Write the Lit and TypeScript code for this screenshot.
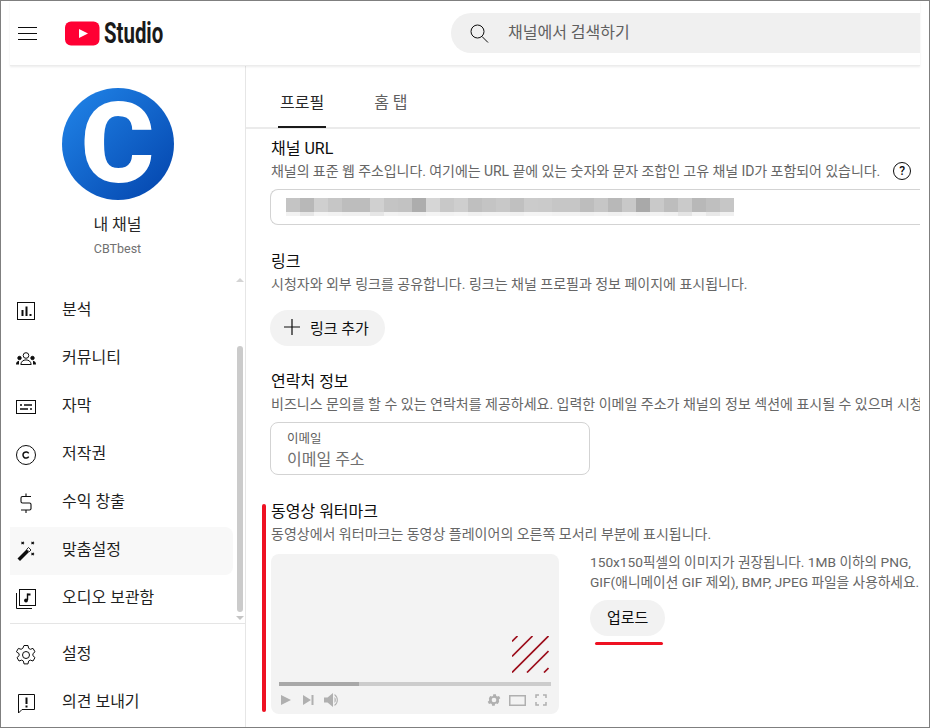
import { LitElement, html, css, svg } from "lit";
import { customElement } from "lit/decorators.js";
import { styleMap } from "lit/directives/style-map.js";

const BLUR = ["#c4c4c4","#b8b8b8","#cfcfcf","#c6c6c6","#bdbdbd","#bdbdbd","#d0d0d0","#c4c4c4","#c2c2c2","#adadad","#d6d6d6","#c8c8c8","#cecece","#bfbfbf","#c4c4c4","#c8c8c8","#c0c0c0","#cbcbcb","#cacaca","#c6c6c6","#c6c6c6","#bdbdbd","#c6c6c6","#b8b8b8","#c8c8c8","#a9a9a9","#c9c9c9","#bdbdbd","#cacaca","#b8b8b8","#bfbfbf","#c6c6c6"];
const BLUR2 = ["#f2f2f2","#e6e6e6","#f4f4f4","#f2f2f2","#f0f0f0","#f0f0f0","#e6e6e6","#f2f2f2","#f0f0f0","#f0f0f0","#f4f4f4","#f2f2f2","#f4f4f4","#f0f0f0","#f2f2f2","#f2f2f2","#f0f0f0","#f4f4f4","#f4f4f4","#f2f2f2","#f2f2f2","#f0f0f0","#f2f2f2","#f0f0f0","#f2f2f2","#f0f0f0","#f2f2f2","#f0f0f0","#e4e4e4","#f2f2f2","#e8e8e8","#f0f0f0"];

const I = (body: unknown) => html`<svg class="ico" viewBox="0 0 24 24" fill="none" stroke="#0d0d0d" stroke-width="1">${body}</svg>`;

const ICONS: Record<string, unknown> = {
  analytics: I(svg`<rect x="3.500" y="3.500" width="17" height="17"/><path d="M8.500 11v6M12.500 7.500V17M16.500 15v2" stroke-width="2"/>`),
  community: I(svg`<circle cx="12" cy="8.500" r="2.800"/><path d="M6.800 17.500c.3-3 2.400-4.600 5.200-4.600s4.900 1.600 5.200 4.600z"/><circle cx="5.500" cy="11" r="1.700" fill="#0d0d0d"/><circle cx="18.500" cy="11" r="1.700" fill="#0d0d0d"/><path d="M2 17.500c0-2 1-3.500 3-3.700v3.700zM22 17.500c0-2-1-3.500-3-3.700v3.700z" fill="#0d0d0d" stroke="none"/>`),
  subtitles: I(svg`<rect x="2.500" y="5.500" width="19" height="13"/><path d="M6 10h2M10 10h8M6 14h8M16 14h2" stroke-width="1.500"/>`),
  copyright: I(svg`<circle cx="12" cy="12" r="9.500"/><path d="M14.700 10.300a3.100 3.100 0 1 0 0 3.400" stroke-width="1.500"/>`),
  money: I(svg`<path d="M17 5.500H8.500A1.500 1.500 0 0 0 7 7v3.500A1.500 1.500 0 0 0 8.500 12h7a1.500 1.500 0 0 1 1.500 1.500V17.500a1.500 1.500 0 0 1-1.500 1.500H7M12 2.500v3M12 19v3" stroke-width="1.100"/>`),
  wand: I(svg`<path d="M3.500 19.500l9-9 2.500 2.500-9 9z" fill="#0d0d0d" stroke="none"/><path d="M12.700 10.300l1.800-1.800 2.500 2.500-1.800 1.800z" fill="#fff" stroke-width=".9"/><path d="M7.500 2.800l2.400 2.400M9.900 2.800L7.500 5.200M17.500 2.800l2.400 2.400M19.900 2.800l-2.400 2.400M17.500 13.800l2.400 2.400M19.900 13.800l-2.400 2.400" stroke-width="1.200"/>`),
  audio: I(svg`<rect x="5.500" y="2.500" width="16" height="16"/><path d="M2.500 6v15.500H18"/><path d="M13.500 6.500v6.500" stroke-width="1.400"/><circle cx="12" cy="13.500" r="1.900" fill="#0d0d0d" stroke="none"/><path d="M13.500 6.500h3v2h-3z" fill="#0d0d0d" stroke="none"/>`),
  gear: I(svg`<circle cx="12" cy="12" r="3.500"/><path d="M10 2.500h4l.6 2.800 1.700 1 2.700-.9 2 3.400-2.100 1.900v2l2.100 1.900-2 3.400-2.700-.9-1.700 1-.6 2.800h-4l-.6-2.800-1.700-1-2.700.9-2-3.400 2.100-1.900v-2L2.400 8.800l2-3.400 2.700.9 1.700-1z"/>`),
  feedback: I(svg`<path d="M4.500 3.500h16v15H8L4.500 22z"/><path d="M12.500 6.500v6.500M12.500 14.500v2" stroke-width="2"/>`),
};

const NAV = [
  ["analytics", "분석"], ["community", "커뮤니티"], ["subtitles", "자막"], ["copyright", "저작권"],
  ["money", "수익 창출"], ["wand", "맞춤설정"], ["audio", "오디오 보관함"],
];

@customElement("app-root")
export class AppRoot extends LitElement {
  static styles = css`
    :host { display: block; font-family: Roboto, "Noto Sans CJK KR", sans-serif; color: #0d0d0d; }
    * { box-sizing: border-box; }
    .frame { width: 930px; height: 728px; border: 1px solid #7f7f7f; background: #fff; padding: 0 9px; overflow: hidden; display: flex; flex-direction: column; }
    .ico { width: 24px; height: 24px; flex: none; display: block; }

    .header { height: 65px; flex: none; display: flex; align-items: center; border-bottom: 1px solid #ececec; box-shadow: 0 1px 2px rgba(0,0,0,.08); position: relative; z-index: 1; }
    .burger { width: 19px; margin-left: 8px; display: flex; flex-direction: column; gap: 5px; }
    .burger i { display: block; height: 1px; background: #0d0d0d; }
    .logo { margin-left: 28px; display: flex; align-items: center; gap: 4px; }
    .logo svg { display: block; }
    .studio { display: inline-block; width: 60px; font-family: Roboto, sans-serif; font-weight: 700; font-size: 30px; line-height: 30px; color: #1a1a1a; transform: scaleX(.68); transform-origin: left center; white-space: nowrap; }
    .search { margin-left: 287px; flex: 1; height: 40px; margin-top: -1px; background: #f0f0f0; border-radius: 20px 0 0 20px; display: flex; align-items: center; padding-left: 16px; gap: 17px; }
    .search .ph { font-size: 16px; color: #606060; padding-bottom: 4px; }

    .body { flex: 1; min-height: 0; display: flex; }
    .side { width: 236px; flex: none; border-right: 1px solid #e6e6e6; display: flex; flex-direction: column; position: relative; }
    .profile { display: flex; flex-direction: column; align-items: center; padding: 22px 20px 0 0; height: 221px; flex: none; }
    .avatar { width: 112px; height: 112px; border-radius: 50%; background: linear-gradient(135deg, #2186ea, #0343ab); display: flex; align-items: center; justify-content: center; color: #fff; font-family: Roboto, sans-serif; font-weight: 900; font-size: 112px; line-height: 112px; }
    .name { margin-top: 14px; font-size: 16px; line-height: 22px; color: #282828; }
    .handle { margin-top: 4px; font-size: 12.500px; line-height: 18px; color: #707070; }
    .item { width: 223px; height: 48px; flex: none; display: flex; align-items: center; padding-left: 4px; gap: 24px; font-size: 16px; color: #1f1f1f; border-radius: 0 8px 8px 0; }
    .item span { padding-bottom: 6px; }
    .item.active { background: #f8f8f8; }
    .nav { height: 336px; flex: none; display: flex; flex-direction: column; }
    .divider { height: 1px; background: #e5e5e5; flex: none; margin-bottom: 7px; }
    .scroll-up, .scroll-down { position: absolute; left: 226px; width: 0; height: 0; border-left: 4px solid transparent; border-right: 4px solid transparent; }
    .scroll-up { top: 212px; border-bottom: 4px solid #d4d4d4; }
    .scroll-down { top: 550px; border-top: 4px solid #c4c4c4; }
    .thumb { position: absolute; left: 227px; top: 280px; width: 6px; height: 266px; border-radius: 3px; background: #cbcbcb; }

    .main { flex: 1; min-width: 0; display: flex; flex-direction: column; overflow: hidden; }
    .tabs { height: 63px; flex: none; display: flex; border-bottom: 2px solid #ebebeb; padding-left: 32px; gap: 46px; position: relative; }
    .tab { font-size: 16px; height: 62px; padding: 27px 2px 0; line-height: 20px; color: #606060; }
    .tab.on { color: #282828; border-bottom: 2px solid #1a1a1a; }
    .content { padding: 9px 0 0 25px; display: flex; flex-direction: column; }
    h2 { margin: 0; font-size: 16px; font-weight: 400; line-height: 22px; color: #0d0d0d; }
    p { margin: 0; font-size: 14px; line-height: 22px; color: #666; white-space: nowrap; }
    .desc-row { display: flex; align-items: center; gap: 13px; height: 22px; }
    .desc-row p { letter-spacing: -.06px; }
    .help { width: 18px; height: 18px; border: 1.500px solid #0d0d0d; border-radius: 50%; font-size: 12px; font-weight: 500; display: flex; align-items: center; justify-content: center; color: #0d0d0d; flex: none; }
    .url { margin: 7px 0 0 -1px; height: 36px; border: 1px solid #d3d3d3; border-right: 0; border-radius: 8px 0 0 8px; padding: 8px 0 0 15px; }
    .blur { display: flex; height: 14px; }
    .blur.b { height: 4px; }
    .blur i { display: block; width: 14px; flex: none; }
    .pill { display: inline-flex; align-items: center; height: 36px; border-radius: 18px; background: #f2f2f2; font-size: 15px; color: #0d0d0d; }
    .add { margin: 15px 0 0 -1px; padding: 0 16px 2px 12px; gap: 8px; }
    .links { margin-top: 26px; }
    .contact { margin-top: 25px; }
    .email { width: 320px; height: 53px; margin: 7px 0 0 -1px; border: 1px solid #d3d3d3; border-radius: 8px; padding: 7px 0 0 16px; }
    .email .l { font-size: 12.500px; line-height: 17px; color: #606060; }
    .email .v { margin-top: 2px; font-size: 16px; line-height: 22px; color: #707070; }
    .wm { margin-top: 26px; position: relative; }
    .redbar { position: absolute; left: -9px; top: 3px; width: 4px; height: 208px; border-radius: 2px; background: #ee1122; }
    .wm-row { display: flex; margin-top: 9px; gap: 31px; }
    .preview { width: 288px; height: 160px; flex: none; border-radius: 8px; background: #f3f3f3; display: flex; flex-direction: column; padding: 0 8px; }
    .wm-mark { display: flex; justify-content: flex-end; margin: 82px 2px 0 0; height: 37px; }
    .track { margin-top: 9px; height: 4px; background: #cccccc; }
    .track i { display: block; width: 80px; height: 4px; background: #a8a8a8; }
    .ctrl { display: flex; align-items: center; margin-top: 4px; height: 20px; }
    .ctrl .sp { flex: 1; }
    .ctrl svg { display: block; flex: none; }
    .sk { margin-left: 8px; }
    .vol { margin-left: 8px; }
    .rc { margin-left: 7px; }
    .fs { margin: 0 4px 0 9px; }
    .info { margin-top: -2px; }
    .info p { font-size: 13.700px; line-height: 20px; }
    .upload { margin-top: 8px; padding: 0 17px 3px; }
    .underline { margin: 6px 0 0 5px; width: 68px; height: 3px; border-radius: 2px; background: #ee1122; }
  `;

  render() {
    return html`<div class="frame">
      <header class="header">
        <div class="burger"><i></i><i></i><i></i></div>
        <div class="logo">
          <svg width="35" height="25" viewBox="0 0 35 25"><rect x="0" y="0.500" width="34.500" height="24" rx="6" fill="#ff0033"/><path d="M14 8l9 4.500-9 4.500z" fill="#fff"/></svg>
          <span class="studio">Studio</span>
        </div>
        <div class="search">
          <svg width="24" height="24" viewBox="0 0 24 24" fill="none" stroke="#0d0d0d" stroke-width="1"><circle cx="10.500" cy="10.500" r="6.500"/><path d="M15 15.500l6 6"/></svg>
          <span class="ph">채널에서 검색하기</span>
        </div>
      </header>
      <div class="body">
        <aside class="side">
          <div class="profile">
            <div class="avatar">C</div>
            <div class="name">내 채널</div>
            <div class="handle">CBTbest</div>
          </div>
          <div class="nav">
            ${NAV.map(([k, t]) => html`<div class="item ${k === "wand" ? "active" : ""}">${ICONS[k]}<span>${t}</span></div>`)}
          </div>
          <div class="divider"></div>
          <div class="item">${ICONS.gear}<span>설정</span></div>
          <div class="item">${ICONS.feedback}<span>의견 보내기</span></div>
          <div class="scroll-up"></div><div class="thumb"></div><div class="scroll-down"></div>
        </aside>
        <main class="main">
          <div class="tabs">
            <div class="tab on">프로필</div>
            <div class="tab">홈 탭</div>
          </div>
          <div class="content">
            <h2>채널 URL</h2>
            <div class="desc-row"><p>채널의 표준 웹 주소입니다. 여기에는 URL 끝에 있는 숫자와 문자 조합인 고유 채널 ID가 포함되어 있습니다.</p><div class="help">?</div></div>
            <div class="url">
              <div class="blur">${BLUR.map((c) => html`<i style=${styleMap({ background: c })}></i>`)}</div>
              <div class="blur b">${BLUR2.map((c) => html`<i style=${styleMap({ background: c })}></i>`)}</div>
            </div>
            <div class="links">
              <h2>링크</h2>
              <p>시청자와 외부 링크를 공유합니다. 링크는 채널 프로필과 정보 페이지에 표시됩니다.</p>
              <div class="pill add">
                <svg width="20" height="20" viewBox="0 0 20 20" stroke="#0d0d0d" stroke-width="1.200"><path d="M10 2v16M2 10h16"/></svg>
                <span>링크 추가</span>
              </div>
            </div>
            <div class="contact">
              <h2>연락처 정보</h2>
              <p>비즈니스 문의를 할 수 있는 연락처를 제공하세요. 입력한 이메일 주소가 채널의 정보 섹션에 표시될 수 있으며 시청자가</p>
              <div class="email"><div class="l">이메일</div><div class="v">이메일 주소</div></div>
            </div>
            <div class="wm">
              <div class="redbar"></div>
              <h2>동영상 워터마크</h2>
              <p>동영상에서 워터마크는 동영상 플레이어의 오른쪽 모서리 부분에 표시됩니다.</p>
              <div class="wm-row">
                <div class="preview">
                  <div class="wm-mark">
                    <svg width="37" height="37" viewBox="0 0 37 37" stroke="#9c0f1c" stroke-width="1.700"><path d="M0 5.500L5.500 0M0 20.500L20.500 0M0 36.500L36.500 0M15 36.500L36.500 15M32 36.500L36.500 32"/></svg>
                  </div>
                  <div class="track"><i></i></div>
                  <div class="ctrl">
                    <svg width="14" height="14" viewBox="0 0 14 14" fill="#b0b0b0"><path d="M2 2l10 5-10 5z"/></svg>
                    <svg class="sk" width="14" height="14" viewBox="0 0 14 14" fill="#b0b0b0"><path d="M2 2l8 5-8 5zM10.500 2h2v10h-2z"/></svg>
                    <svg class="vol" width="18" height="18" viewBox="0 0 18 18" fill="#b0b0b0"><path d="M1 6.500h3.500L10 2v14l-5.500-4.500H1z"/><path d="M11.500 6a4 4 0 0 1 0 6zM11.500 3a7 7 0 0 1 0 12v-1.500a5.500 5.500 0 0 0 0-9z"/></svg>
                    <span class="sp"></span>
                    <svg width="16" height="16" viewBox="0 0 24 24" fill="#b0b0b0" fill-rule="evenodd"><path d="M19.400 13a7.500 7.500 0 0 0 0-2l2.100-1.600-2-3.500-2.500 1a7.500 7.500 0 0 0-1.700-1l-.4-2.700h-4l-.4 2.700a7.500 7.500 0 0 0-1.700 1l-2.500-1-2 3.500L4.600 11a7.500 7.500 0 0 0 0 2l-2.100 1.600 2 3.500 2.500-1a7.500 7.500 0 0 0 1.700 1l.4 2.700h4l.4-2.700a7.500 7.500 0 0 0 1.700-1l2.500 1 2-3.500zM12 15.500a3.500 3.500 0 1 1 0-7 3.500 3.500 0 0 1 0 7z"/></svg>
                    <svg class="rc" width="17" height="11" viewBox="0 0 17 11" fill="none" stroke="#b0b0b0" stroke-width="1.500"><rect x=".75" y=".75" width="15.500" height="9.500"/></svg>
                    <svg class="fs" width="12" height="12" viewBox="0 0 12 12" fill="none" stroke="#b0b0b0" stroke-width="1.500"><path d="M1 4V1h3M8 1h3v3M11 8v3H8M4 11H1V8"/></svg>
                  </div>
                </div>
                <div class="info">
                  <p>150x150픽셀의 이미지가 권장됩니다. 1MB 이하의 PNG,</p>
                  <p>GIF(애니메이션 GIF 제외), BMP, JPEG 파일을 사용하세요.</p>
                  <div class="pill upload">업로드</div>
                  <div class="underline"></div>
                </div>
              </div>
            </div>
          </div>
        </main>
      </div>
    </div>`;
  }
}
